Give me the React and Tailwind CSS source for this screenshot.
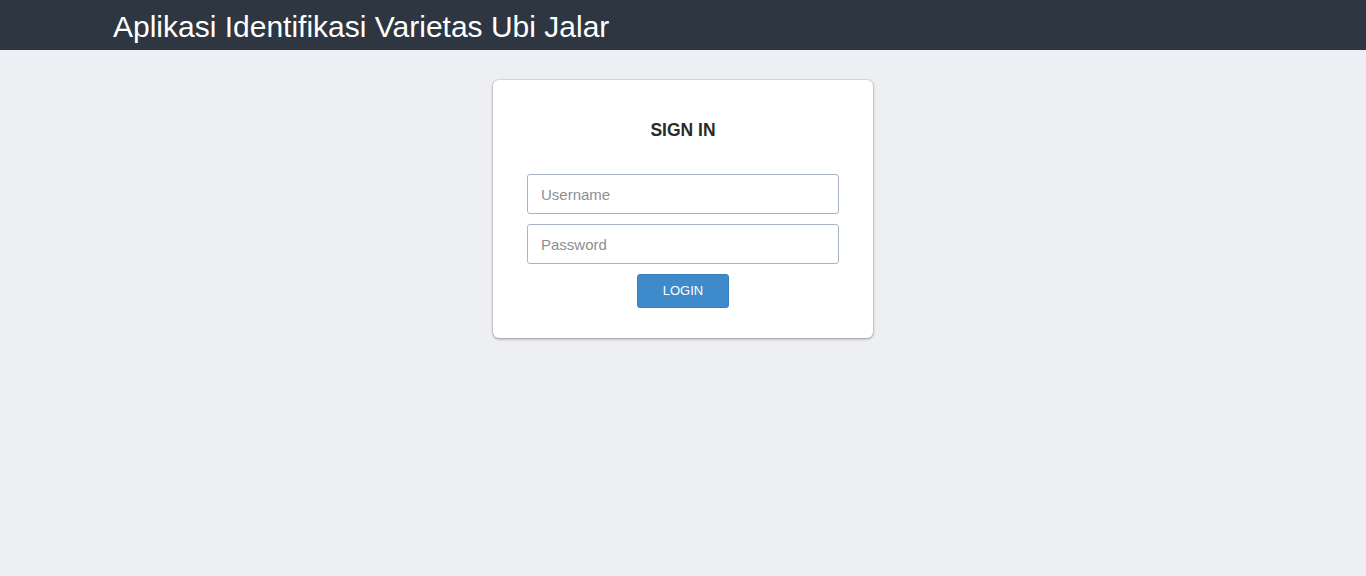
export default function App() {
  return (
    <div className="min-h-[576px] bg-[#eeeff3] font-['Liberation_Sans',Arial,sans-serif]">
      <header className="h-[50px] bg-[#2d3641] flex items-center pl-[113px]">
        <h1 className="text-[30px] leading-none text-white mt-[3px]">Aplikasi Identifikasi Varietas Ubi Jalar</h1>
      </header>
      <div className="flex justify-center pt-[30px]">
        <div className="w-[380px] h-[258px] bg-white rounded-[6px] shadow-[0_1px_3px_rgba(0,0,0,0.35),0_0_0_1px_rgba(0,0,0,0.06)] px-[34px] pt-[40px]">
          <h2 className="text-center text-[17.5px] font-bold text-[#2a2a2a] leading-[20px]">SIGN IN</h2>
          <div className="mt-[34px] flex flex-col gap-[10px]">
            <input
              type="text"
              placeholder="Username"
              className="h-[40px] w-full rounded-[3px] border border-[#a9b4c2] px-[13px] text-[15px] placeholder:text-[#8c8f94] outline-none"
            />
            <input
              type="password"
              placeholder="Password"
              className="h-[40px] w-full rounded-[3px] border border-[#a9b4c2] px-[13px] text-[15px] placeholder:text-[#8c8f94] outline-none"
            />
          </div>
          <div className="flex justify-center mt-[10px]">
            <button className="w-[92px] h-[34px] rounded-[3px] bg-[#3f8acb] text-white text-[13px] border border-[#3a7fbd]">LOGIN</button>
          </div>
        </div>
      </div>
    </div>
  );
}
